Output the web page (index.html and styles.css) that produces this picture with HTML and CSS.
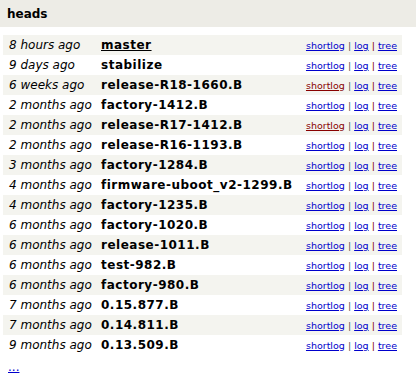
FILE: index.html
```html
<!DOCTYPE html>
<html lang="en">
<head>
    <meta charset="UTF-8">
    <title>heads</title>
    <link rel="stylesheet" href="styles.css">
</head>
<body>
    <div class="header">
        <a class="title" href="#">heads</a>
    </div>

    <table class="heads">
        <tr class="dark">
            <td class="age">8 hours ago</td>
            <td class="name"><a class="current" href="#">master</a></td>
            <td class="link"><a href="#">shortlog</a> <span class="sep">|</span> <a href="#">log</a> <span class="sep2">|</span> <a href="#">tree</a></td>
        </tr>
        <tr class="light">
            <td class="age">9 days ago</td>
            <td class="name"><a href="#">stabilize</a></td>
            <td class="link"><a href="#">shortlog</a> <span class="sep">|</span> <a href="#">log</a> <span class="sep2">|</span> <a href="#">tree</a></td>
        </tr>
        <tr class="dark">
            <td class="age">6 weeks ago</td>
            <td class="name"><a href="#">release-R18-1660.B</a></td>
            <td class="link"><a class="visited" href="#">shortlog</a> <span class="sep">|</span> <a href="#">log</a> <span class="sep2">|</span> <a href="#">tree</a></td>
        </tr>
        <tr class="light">
            <td class="age">2 months ago</td>
            <td class="name"><a href="#">factory-1412.B</a></td>
            <td class="link"><a href="#">shortlog</a> <span class="sep">|</span> <a href="#">log</a> <span class="sep2">|</span> <a href="#">tree</a></td>
        </tr>
        <tr class="dark">
            <td class="age">2 months ago</td>
            <td class="name"><a href="#">release-R17-1412.B</a></td>
            <td class="link"><a class="visited" href="#">shortlog</a> <span class="sep">|</span> <a href="#">log</a> <span class="sep2">|</span> <a href="#">tree</a></td>
        </tr>
        <tr class="light">
            <td class="age">2 months ago</td>
            <td class="name"><a href="#">release-R16-1193.B</a></td>
            <td class="link"><a href="#">shortlog</a> <span class="sep">|</span> <a href="#">log</a> <span class="sep2">|</span> <a href="#">tree</a></td>
        </tr>
        <tr class="dark">
            <td class="age">3 months ago</td>
            <td class="name"><a href="#">factory-1284.B</a></td>
            <td class="link"><a href="#">shortlog</a> <span class="sep">|</span> <a href="#">log</a> <span class="sep2">|</span> <a href="#">tree</a></td>
        </tr>
        <tr class="light">
            <td class="age">4 months ago</td>
            <td class="name"><a href="#">firmware-uboot_v2-1299.B</a></td>
            <td class="link"><a href="#">shortlog</a> <span class="sep">|</span> <a href="#">log</a> <span class="sep2">|</span> <a href="#">tree</a></td>
        </tr>
        <tr class="dark">
            <td class="age">4 months ago</td>
            <td class="name"><a href="#">factory-1235.B</a></td>
            <td class="link"><a href="#">shortlog</a> <span class="sep">|</span> <a href="#">log</a> <span class="sep2">|</span> <a href="#">tree</a></td>
        </tr>
        <tr class="light">
            <td class="age">6 months ago</td>
            <td class="name"><a href="#">factory-1020.B</a></td>
            <td class="link"><a href="#">shortlog</a> <span class="sep">|</span> <a href="#">log</a> <span class="sep2">|</span> <a href="#">tree</a></td>
        </tr>
        <tr class="dark">
            <td class="age">6 months ago</td>
            <td class="name"><a href="#">release-1011.B</a></td>
            <td class="link"><a href="#">shortlog</a> <span class="sep">|</span> <a href="#">log</a> <span class="sep2">|</span> <a href="#">tree</a></td>
        </tr>
        <tr class="light">
            <td class="age">6 months ago</td>
            <td class="name"><a href="#">test-982.B</a></td>
            <td class="link"><a href="#">shortlog</a> <span class="sep">|</span> <a href="#">log</a> <span class="sep2">|</span> <a href="#">tree</a></td>
        </tr>
        <tr class="dark">
            <td class="age">6 months ago</td>
            <td class="name"><a href="#">factory-980.B</a></td>
            <td class="link"><a href="#">shortlog</a> <span class="sep">|</span> <a href="#">log</a> <span class="sep2">|</span> <a href="#">tree</a></td>
        </tr>
        <tr class="light">
            <td class="age">7 months ago</td>
            <td class="name"><a href="#">0.15.877.B</a></td>
            <td class="link"><a href="#">shortlog</a> <span class="sep">|</span> <a href="#">log</a> <span class="sep2">|</span> <a href="#">tree</a></td>
        </tr>
        <tr class="dark">
            <td class="age">7 months ago</td>
            <td class="name"><a href="#">0.14.811.B</a></td>
            <td class="link"><a href="#">shortlog</a> <span class="sep">|</span> <a href="#">log</a> <span class="sep2">|</span> <a href="#">tree</a></td>
        </tr>
        <tr class="light">
            <td class="age">9 months ago</td>
            <td class="name"><a href="#">0.13.509.B</a></td>
            <td class="link"><a href="#">shortlog</a> <span class="sep">|</span> <a href="#">log</a> <span class="sep2">|</span> <a href="#">tree</a></td>
        </tr>
    </table>

    <div class="more"><a href="#">...</a></div>
</body>
</html>
```

FILE: styles.css
```css
body {
    margin: 0;
    font-family: "DejaVu Sans", Verdana, sans-serif;
    font-size: 12px;
    color: #000;
    background-color: #fff;
}
a {
    color: #0000cc;
}
.header {
    background-color: #edece6;
    height: 27px;
    padding: 0 7px;
    display: flex;
    align-items: center;
}
.header .title {
    color: #000;
    font-weight: bold;
    font-size: 12px;
    text-decoration: none;
}
.heads {
    border-collapse: collapse;
    margin: 8px 0 0 3px;
    width: 399px;
}
.heads td {
    height: 20px;
    padding: 0;
    white-space: nowrap;
}
.dark {
    background-color: #f4f4ef;
}
.light {
    background-color: #fff;
}
.age {
    font-style: italic;
    padding-left: 6px !important;
    width: 92px;
}
.name a {
    color: #000;
    font-weight: bold;
    text-decoration: none;
    letter-spacing: 0.5px;
}
.name a.current {
    text-decoration: underline;
}
.link {
    text-align: right;
    font-size: 9.5px;
    padding-right: 5px !important;
}
.link a.visited {
    color: #880000;
}
.sep {
    color: #555;
}
.sep2 {
    color: #880000;
}
.more {
    padding: 5px 0 0 8px;
    font-size: 12px;
}
```
